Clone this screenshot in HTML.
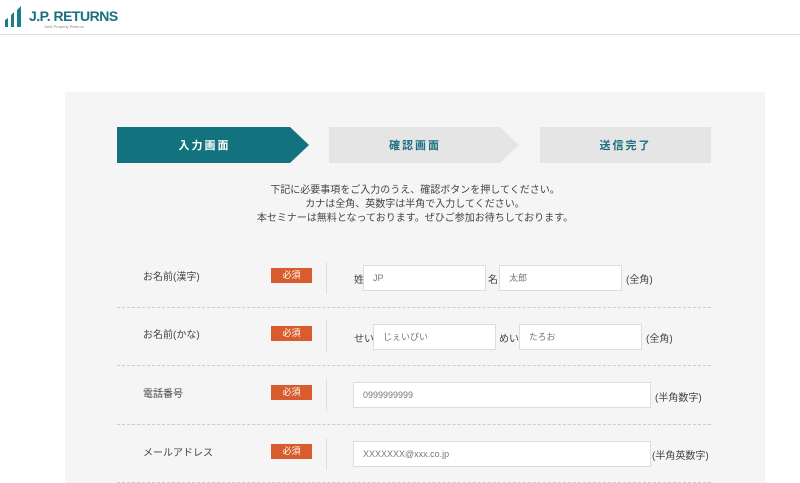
<!DOCTYPE html>
<html><head><meta charset="utf-8"><style>
*{margin:0;padding:0;box-sizing:border-box}
body{width:800px;height:483px;overflow:hidden;background:#fff;font-family:"Liberation Sans","Noto Sans CJK JP",sans-serif;color:#333;position:relative}
.a{position:absolute}
.hdr{left:0;top:0;width:800px;height:35px;border-bottom:1px solid #ddd}
.panel{left:65px;top:92px;width:700px;height:391px;background:#f5f5f5}
.step{top:127px;height:36px;font-size:11px;font-weight:bold;letter-spacing:2px;display:flex;align-items:center;justify-content:center}
.t{font-size:10px;color:#444;text-align:center;left:65px;width:700px;line-height:14px}
.lbl{left:143px;font-size:10px;color:#444}
.badge{left:271px;width:41px;height:15px;background:#d95c2e;color:#fff;font-size:9px;text-align:center;line-height:15px}
.sep{left:326px;width:1px;height:32px;background:#ddd}
.div{left:117px;width:594px;border-top:1px dashed #ccc;height:0}
.in{background:#fff;border:1px solid #ddd;height:26px;font-size:9px;color:#777;padding-left:9px;line-height:24px}
.s{font-size:10px;color:#444}
</style></head><body>
<div class="a hdr"></div>
<svg class="a" style="left:4px;top:5px" width="22" height="24" viewBox="0 0 22 24">
<path d="M1 22 L1 15 L4 13 L4 22Z M7 22 L7 10 L10 7 L10 22Z M13 22 L13 5 L17 1 L17 22Z" fill="#1a7d8a"/></svg>
<div class="a" style="left:29px;top:8px;font-size:14px;font-weight:bold;color:#1a6f7f;letter-spacing:-0.5px">J.P. RETURNS</div>
<div class="a" style="left:44px;top:24px;font-size:4px;color:#888">Joint Property Returns</div>
<div class="a panel"></div>
<svg class="a" style="left:117px;top:127px" width="600" height="36">
<polygon points="0,0 173,0 192,18 173,36 0,36" fill="#12737f"/>
<polygon points="212,0 383,0 402,18 383,36 212,36" fill="#e5e5e5"/>
<rect x="423" y="0" width="171" height="36" fill="#e5e5e5"/></svg>
<div class="a step" style="left:117px;width:175px;color:#fff">入力画面</div>
<div class="a step" style="left:329px;width:172px;color:#1a6f7f">確認画面</div>
<div class="a step" style="left:540px;width:171px;color:#1a6f7f">送信完了</div>
<div class="a t" style="top:184px">下記に必要事項をご入力のうえ、確認ボタンを押してください。<br>カナは全角、英数字は半角で入力してください。<br>本セミナーは無料となっております。ぜひご参加お待ちしております。</div>

<div class="a lbl" style="top:268px">お名前(漢字)</div>
<div class="a badge" style="top:268px">必須</div>
<div class="a sep" style="top:262px"></div>
<div class="a s" style="left:354px;top:271px">姓</div>
<div class="a in" style="left:363px;top:265px;width:123px">JP</div>
<div class="a s" style="left:488px;top:271px">名</div>
<div class="a in" style="left:499px;top:265px;width:123px">太郎</div>
<div class="a s" style="left:626px;top:271px">(全角)</div>
<div class="a div" style="top:307px"></div>

<div class="a lbl" style="top:326px">お名前(かな)</div>
<div class="a badge" style="top:326px">必須</div>
<div class="a sep" style="top:320px"></div>
<div class="a s" style="left:354px;top:330px">せい</div>
<div class="a in" style="left:373px;top:324px;width:123px">じぇいぴい</div>
<div class="a s" style="left:499px;top:330px">めい</div>
<div class="a in" style="left:519px;top:324px;width:123px">たろお</div>
<div class="a s" style="left:646px;top:330px">(全角)</div>
<div class="a div" style="top:365px"></div>

<div class="a lbl" style="top:385px">電話番号</div>
<div class="a badge" style="top:385px">必須</div>
<div class="a sep" style="top:379px"></div>
<div class="a in" style="left:353px;top:382px;width:298px">0999999999</div>
<div class="a s" style="left:655px;top:389px">(半角数字)</div>
<div class="a div" style="top:424px"></div>

<div class="a lbl" style="top:444px">メールアドレス</div>
<div class="a badge" style="top:444px">必須</div>
<div class="a sep" style="top:438px"></div>
<div class="a in" style="left:353px;top:441px;width:298px">XXXXXXX@xxx.co.jp</div>
<div class="a s" style="left:652px;top:447px">(半角英数字)</div>
<div class="a div" style="top:482px"></div>
</body></html>
